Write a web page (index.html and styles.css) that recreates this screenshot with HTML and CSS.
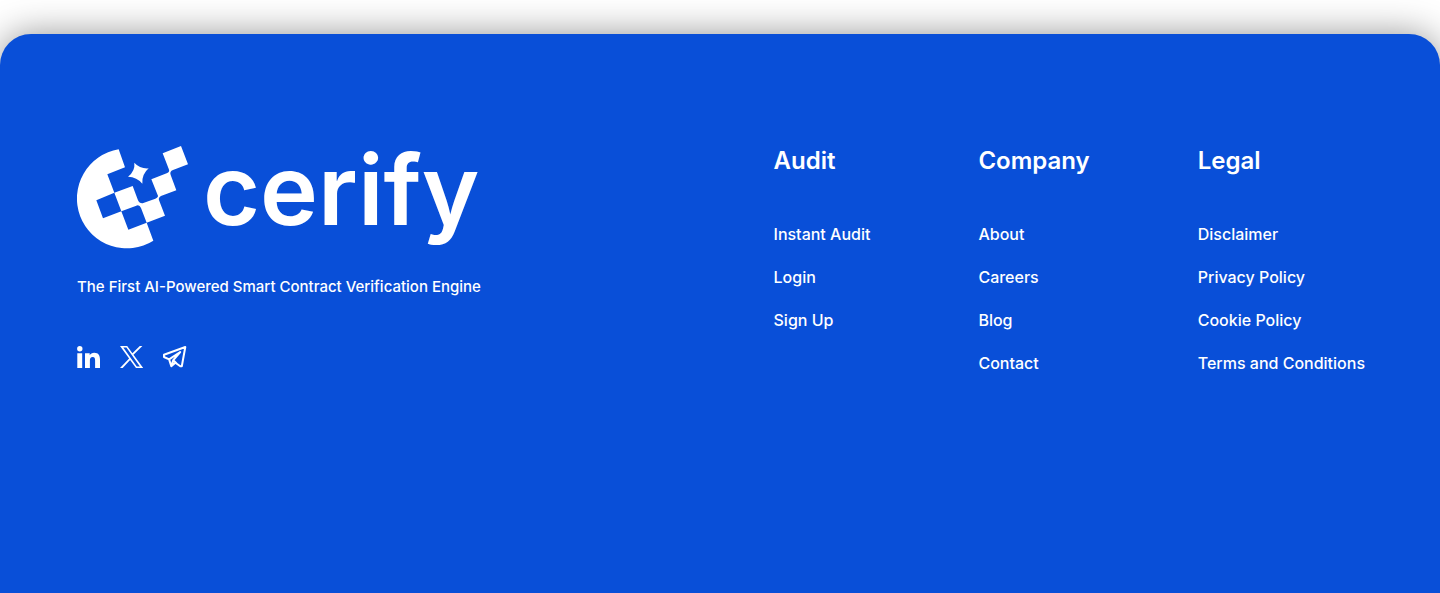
FILE: index.html
```html
<!DOCTYPE html>
<html lang="en">
<head>
<meta charset="utf-8">
<meta name="viewport" content="width=device-width, initial-scale=1">
<title>Cerify</title>
<link rel="stylesheet" href="styles.css">
</head>
<body>
<footer class="footer">
  <div class="brand">
    <a class="logo" href="#">
      <svg class="logo-mark" viewBox="21 17 333 309" aria-hidden="true">
        <path d="M146 27L165 81L112 102L133 157L79 180L99 234L154 213L175 268L230 247L250 301A149.500 149.500 0 1 1 146 27Z"/>
        <path d="M133 157L188 137L204 180Q208 190 218 189L256 175Q268 171 262 162L244 117L290 99Q301 94 296 85L278 39L333 17L354 72L309 89Q298 93 302 104L319 150L273 167Q263 173 268 182L285 226L230 247L213 203Q208 191 197 197L154 213Z"/>
        <path d="M193 67Q210 86 236 84Q215 102 217 130Q201 110 174 109Q196 92 193 67Z"/>
      </svg>
      <span class="logo-name">cerify</span>
    </a>
    <p class="tagline">The First AI-Powered Smart Contract Verification Engine</p>
    <div class="social">
      <a href="#" aria-label="LinkedIn">
        <svg class="icon" viewBox="0 0 24 24" aria-hidden="true"><path d="M.3 8.200h4.900V23H.3zM2.800 1a2.700 2.700 0 1 1 0 5.400A2.700 2.700 0 0 1 2.800 1zM8 8.200h4.700v2c.8-1.400 2.400-2.400 4.500-2.400 4.500 0 5.800 2.800 5.800 7V23h-4.900v-7.300c0-2-.3-3.700-2.400-3.700-2.200 0-2.800 1.700-2.800 3.700V23H8z"/></svg>
      </a>
      <a href="#" aria-label="X">
        <svg class="icon" viewBox="0 0 24 24" aria-hidden="true"><path fill-rule="evenodd" d="M0 1h7.200l5.200 7.200L19.800 1h2.600L13.500 9.700 23.200 23H16l-5.900-8L2.700 23H0l9.100-9.500zM3.300 2.600 16.800 21.400h3.100L6.400 2.600z"/></svg>
      </a>
      <a href="#" aria-label="Telegram">
        <svg class="icon icon-line" viewBox="0 0 24 24" aria-hidden="true"><path d="M22.300 2 1 9.800v2.200l5.100 2.400 2.200 6.800 4.100-3.400 4.900 3.500h1.500zM6.100 14.400 17.200 7 10.300 15.200 8.300 21M10.300 15.200l3.100 3"/></svg>
      </a>
    </div>
  </div>
  <nav class="links" aria-label="Footer">
    <section class="column">
      <h2>Audit</h2>
      <ul>
        <li><a href="#">Instant Audit</a></li>
        <li><a href="#">Login</a></li>
        <li><a href="#">Sign Up</a></li>
      </ul>
    </section>
    <section class="column">
      <h2>Company</h2>
      <ul>
        <li><a href="#">About</a></li>
        <li><a href="#">Careers</a></li>
        <li><a href="#">Blog</a></li>
        <li><a href="#">Contact</a></li>
      </ul>
    </section>
    <section class="column">
      <h2>Legal</h2>
      <ul>
        <li><a href="#">Disclaimer</a></li>
        <li><a href="#">Privacy Policy</a></li>
        <li><a href="#">Cookie Policy</a></li>
        <li><a href="#">Terms and Conditions</a></li>
      </ul>
    </section>
  </nav>
</footer>
</body>
</html>
```
FILE: styles.css
```css
* { box-sizing: border-box; }
body {
  display: flex;
  min-height: 100vh;
  margin: 0;
  padding-top: 34px;
  background: #fff;
  color: #fff;
  font-family: Inter, "Liberation Sans", sans-serif;
  font-size: 16px;
  font-weight: 500;
  line-height: 20px;
}
a { color: inherit; text-decoration: none; }
h2, p, ul { margin: 0; padding: 0; }
ul { list-style: none; }
.footer {
  display: flex;
  flex: 1;
  justify-content: space-between;
  gap: 48px;
  padding: 112px 75px 48px 77px;
  border-radius: 31px 31px 0 0;
  background: #094fd8;
  box-shadow: 0 0 36px rgba(0, 0, 0, 0.42);
}
.logo { display: flex; gap: 15px; height: 103px; }
.logo-mark { width: 111px; height: 103px; fill: #fff; }
.logo-name {
  font-size: 98px;
  font-weight: 600;
  line-height: 88px;
}
.tagline { margin-top: 28px; font-size: 15px; }
.social { display: flex; gap: 19px; margin-top: 48px; }
.icon { display: block; width: 24px; height: 24px; fill: #fff; }
.icon-line { fill: none; stroke: #fff; stroke-width: 2; stroke-linejoin: round; stroke-linecap: round; }
.links { display: flex; gap: 108px; }
.column h2 { font-size: 24px; font-weight: 600; line-height: 30px; }
.column ul { display: grid; gap: 23px; margin-top: 48px; }
```
